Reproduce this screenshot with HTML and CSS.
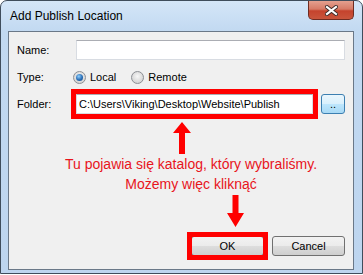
FILE: index.html
```html
<!DOCTYPE html>
<html lang="pl">
<head>
    <meta charset="UTF-8">
    <title>Add Publish Location</title>
    <link rel="stylesheet" href="styles.css">
</head>
<body>

<div class="window">
    <div class="titlebar">
        <span class="title">Add Publish Location</span>
        <div class="close">
            <svg width="13" height="11" viewBox="0 0 13 11">
                <path d="M2 2 L11 9 M11 2 L2 9" stroke="#3b2a28" stroke-width="4" stroke-linecap="square"/>
                <path d="M2 2 L11 9 M11 2 L2 9" stroke="#ffffff" stroke-width="2.2" stroke-linecap="square"/>
            </svg>
        </div>
    </div>

    <div class="client">
        <div class="form">
            <label>Name:</label>
            <input type="text" class="textbox" value="">

            <label>Type:</label>
            <div class="radios">
                <span class="radio checked"></span><span class="radio-text">Local</span>
                <span class="radio"></span><span class="radio-text">Remote</span>
            </div>

            <label>Folder:</label>
            <div class="folder">
                <div class="mark"><input type="text" class="textbox" value="C:\Users\Viking\Desktop\Website\Publish"></div>
                <button class="browse">..</button>
            </div>
        </div>

        <!-- strzalki i opis -->
        <div class="note">
            <svg class="arrow-up" width="18" height="32" viewBox="0 0 18 32">
                <polygon points="9,0 18,11 12,11 12,32 6,32 6,11 0,11" fill="#ff0000"/>
            </svg>
            <p class="note-text">Tu pojawia się katalog, który wybraliśmy.<br>Możemy więc kliknąć</p>
            <svg class="arrow-down" width="17" height="32" viewBox="0 0 17 32">
                <polygon points="5.5,0 11.5,0 11.5,18 17,18 8.5,32 0,18 5.5,18" fill="#ff0000"/>
            </svg>
        </div>

        <div class="buttons">
            <div class="mark mark-btn"><button class="btn">OK</button></div>
            <button class="btn">Cancel</button>
        </div>
    </div>
</div>

</body>
</html>
```

FILE: styles.css
```css
body {
    margin: 0;
    background-color: #ffffff;
    font-family: "Liberation Sans", Arial, sans-serif;
    font-size: 11px;
    color: #000000;
}

.window {
    width: 363px;
    box-sizing: border-box;
    border: 1px solid #3f4d5c;
    border-radius: 7px 7px 0 0;
    background: linear-gradient(#d4e6f8, #c2d9f1 30px, #bdd5ef);
    overflow: hidden;
}

/* pasek tytulu */
.titlebar {
    height: 30px;
    display: flex;
    align-items: flex-start;
    justify-content: space-between;
}
.title {
    font-size: 12px;
    line-height: 30px;
    padding-left: 9px;
    color: #000000;
}
.close {
    width: 46px;
    height: 19px;
    box-sizing: border-box;
    margin-right: 8px;
    border: 1px solid #6e2c22;
    border-top: none;
    border-radius: 0 0 5px 5px;
    background: linear-gradient(#e4a08f, #d67a66 45%, #c5432d 55%, #c9553c);
    display: flex;
    align-items: center;
    justify-content: center;
}

/* obszar okna */
.client {
    margin: 0 8px 3px 7px;
    border: 1px solid #6a7888;
    background-color: #f0f0f0;
    padding: 8px 8px 13px 8px;
}

.form {
    display: grid;
    grid-template-columns: 59px 1fr;
    grid-template-rows: 20px 20px 20px;
    row-gap: 7px;
    align-items: center;
}
.form label {
    line-height: 20px;
}

.textbox {
    display: block;
    box-sizing: border-box;
    width: 100%;
    height: 20px;
    margin: 0;
    padding: 0 2px;
    font-family: "Liberation Sans", Arial, sans-serif;
    font-size: 11px;
    color: #000000;
    background-color: #ffffff;
    border: 1px solid #d8dce2;
    border-top-color: #abadb3;
    border-radius: 0;
    outline: none;
}

/* czerwona ramka */
.mark {
    outline: 5px solid #ff0000;
    border-radius: 0;
}

.radios {
    display: flex;
    align-items: center;
    margin-left: -3px;
}
.radio {
    width: 13px;
    height: 13px;
    box-sizing: border-box;
    border-radius: 50%;
    border: 1px solid #8c8f94;
    background: radial-gradient(circle at 50% 40%, #f7f7f7, #d6d6d6 70%);
    margin-right: 4px;
    display: flex;
    align-items: center;
    justify-content: center;
}
.radio.checked::after {
    content: "";
    width: 7px;
    height: 7px;
    border-radius: 50%;
    background: radial-gradient(circle at 40% 35%, #8fd0ff, #2a6db5 55%, #17467e);
}
.radio-text {
    margin-right: 15px;
}

.folder {
    display: flex;
    gap: 8px;
}
.folder .mark {
    flex: 1;
}
.browse {
    width: 24px;
    height: 20px;
    padding: 0;
    box-sizing: border-box;
    border: 1px solid #3c7fb1;
    border-radius: 3px;
    background: linear-gradient(#eaf6fd, #d9f0fc 50%, #bee6fd 50%, #a7d9f5);
    font-family: "Liberation Sans", Arial, sans-serif;
    font-size: 11px;
    line-height: 18px;
    color: #000000;
}

/* opis na czerwono */
.note {
    display: flex;
    flex-direction: column;
    align-items: flex-start;
}
.arrow-up {
    display: block;
    margin-top: 8px;
    margin-left: 156px;
}
.note-text {
    margin: 0;
    align-self: stretch;
    padding-left: 20px;
    text-align: center;
    font-size: 14px;
    line-height: 20px;
    color: #e8141c;
}
.arrow-down {
    display: block;
    margin-top: 1px;
    margin-left: 210px;
}

.buttons {
    display: flex;
    justify-content: flex-end;
    gap: 8px;
    margin-top: 9px;
}
.btn {
    display: block;
    width: 73px;
    height: 20px;
    padding: 0;
    box-sizing: border-box;
    border: 1px solid #707070;
    border-radius: 3px;
    background: linear-gradient(#f2f2f2, #ebebeb 50%, #dddddd 50%, #cfcfcf);
    font-family: "Liberation Sans", Arial, sans-serif;
    font-size: 11px;
    color: #000000;
}
.mark-btn {
    outline-offset: -1px;
}
```
